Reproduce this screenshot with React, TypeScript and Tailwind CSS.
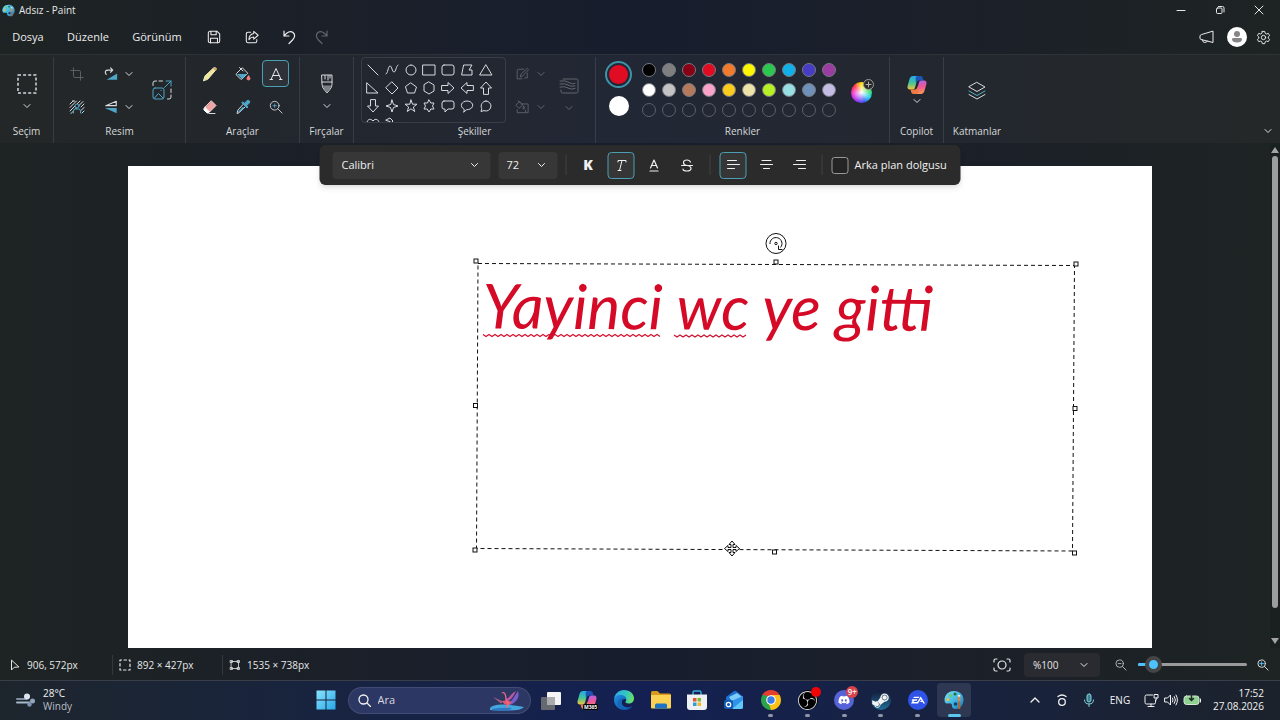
import React, { useState } from 'react';
import clsx from 'clsx';
import { FaDiscord, FaSteamSymbol } from 'react-icons/fa';
import { SiEa, SiObsstudio } from 'react-icons/si';

interface GlyphProps {
    size?: number;
    className?: string;
    box?: number;
    width?: number;
    children: React.ReactNode;
}

// Outline icon on a square grid, one unit is one pixel when box equals size
const Glyph: React.FC<GlyphProps> = ({ size = 16, box = 16, width = 1, className, children }) => (
    <svg
        width={size}
        height={size}
        viewBox={`0 0 ${box} ${box}`}
        fill="none"
        stroke="currentColor"
        strokeWidth={width}
        strokeLinecap="round"
        strokeLinejoin="round"
        className={clsx('shrink-0', className)}
        aria-hidden="true"
    >
        {children}
    </svg>
);

const Chevron: React.FC<{ className?: string }> = ({ className }) => (
    <Glyph size={8} box={8} className={className}>
        <path d="M1 2.5l3 3 3-3" />
    </Glyph>
);

const PaintLogo: React.FC<{ size: number }> = ({ size }) => (
    <svg width={size} height={size} viewBox="0 0 20 20" aria-hidden="true" className="shrink-0">
        <defs>
            <linearGradient id="palette" x1="0" y1="0" x2="1" y2="1">
                <stop offset="0" stopColor="#7de0f5" />
                <stop offset="0.55" stopColor="#3fb4e0" />
                <stop offset="1" stopColor="#1b74bc" />
            </linearGradient>
        </defs>
        <path d="M10 1C4 1 .5 5.500.5 10c0 3 2 4 4 3.500 2-.6 3.500.3 3.500 2 0 2 .8 3.500 3.500 3.500 4.500 0 8-4 8-9C19.500 4.500 15.500 1 10 1z" fill="url(#palette)" />
        <circle cx="4" cy="9.500" r="1.500" fill="#f2c230" />
        <circle cx="6.500" cy="5.500" r="1.500" fill="#6ccb5f" />
        <circle cx="11" cy="4" r="1.500" fill="#246d3c" />
        <circle cx="15" cy="6" r="1.300" fill="#e8eef2" />
        <circle cx="11.500" cy="14" r="1.800" fill="#17406b" />
        <path d="M13.800 6.500c2-.5 3.200.5 2.700 3l-.3 2h-2l-.6-2z" fill="#c98d55" />
        <path d="M14.200 11.500h2l.2 6.500c0 1.300-2.400 1.300-2.400 0z" fill="#a76b3c" />
    </svg>
);

const CopilotLogo: React.FC<{ id: string }> = ({ id }) => (
    <svg width="20" height="20" viewBox="0 0 20 20" aria-hidden="true">
        <defs>
            <linearGradient id={`${id}a`} x1="0" y1="0" x2="0" y2="1">
                <stop offset="0" stopColor="#2aa6e8" />
                <stop offset="0.5" stopColor="#3fc59b" />
                <stop offset="1" stopColor="#f0c53a" />
            </linearGradient>
            <linearGradient id={`${id}b`} x1="0.3" y1="0" x2="0.5" y2="1">
                <stop offset="0" stopColor="#a667e8" />
                <stop offset="0.5" stopColor="#f0569a" />
                <stop offset="1" stopColor="#f79a4a" />
            </linearGradient>
        </defs>
        <path d="M12.500 1H6C4 1 3 2.500 2.400 4.500L.6 11c-.5 2 .4 3.500 2.300 3.500h2.500c1.500 0 2.300-.8 2.700-2.200L10 5.500z" fill={`url(#${id}a)`} />
        <path d="M10.500 1h3c1.300 0 2 .8 2.300 2l.7 2.500h-4.200c-1.500 0-2.200.8-2.600 2L9 9 8.600 4c0-1.800.7-3 1.900-3z" fill="#1c55b8" />
        <path d="M7.500 19H14c2 0 3-1.500 3.600-3.500L19.400 9c.5-2-.4-3.500-2.300-3.500h-2.500c-1.500 0-2.300.8-2.700 2.200L10 14.500z" fill={`url(#${id}b)`} />
        <path d="M9.500 19h-3c-1.300 0-2-.8-2.300-2l-.7-2.500h4.200c1.500 0 2.200-.8 2.600-2L11 11l.4 5c0 1.800-.7 3-1.900 3z" fill="#ee7b45" />
    </svg>
);

// Gallery of shapes, each drawn on a 14 x 14 grid
const SHAPES: { name: string; d: string }[] = [
    { name: 'Çizgi', d: 'M2 2l10 10' },
    { name: 'Eğri', d: 'M1 11C3 11 3 3 5 3s2 6 4 6 2-6 4-7' },
    { name: 'Oval', d: 'M7 2a5 5 0 1 0 0 10A5 5 0 1 0 7 2' },
    { name: 'Dikdörtgen', d: 'M1 2h12v10H1z' },
    { name: 'Yuvarlatılmış dikdörtgen', d: 'M3 2h8q2 0 2 2v6q0 2-2 2H3q-2 0-2-2V4q0-2 2-2z' },
    { name: 'Çokgen', d: 'M4 2h8L9 7h3v5H2z' },
    { name: 'Üçgen', d: 'M7 2l6 10H1z' },
    { name: 'Dik üçgen', d: 'M1 2l11 10H1z' },
    { name: 'Elmas', d: 'M7 1l6 6-6 6-6-6z' },
    { name: 'Beşgen', d: 'M7 2l5.500 4-2 6h-7l-2-6z' },
    { name: 'Altıgen', d: 'M7 1l5 3v6l-5 3-5-3V4z' },
    { name: 'Sağ ok', d: 'M1 4.500h6V1.500L13 7l-6 5.500v-3H1z' },
    { name: 'Sol ok', d: 'M13 4.500H7V1.500L1 7l6 5.500v-3h6z' },
    { name: 'Yukarı ok', d: 'M4.500 13V7H1.500L7 1l5.500 6h-3v6z' },
    { name: 'Aşağı ok', d: 'M4.500 1v6H1.500L7 13l5.500-6h-3V1z' },
    { name: 'Dört köşeli yıldız', d: 'M7 1l1.500 4.500L13 7 8.500 8.500 7 13 5.500 8.500 1 7l4.500-1.500z' },
    { name: 'Beş köşeli yıldız', d: 'M7 1l1.500 4.200H13L9.400 8l1.300 4.500L7 9.800l-3.700 2.700L4.600 8 1 5.200h4.500z' },
    { name: 'Altı köşeli yıldız', d: 'M7 1l1.800 3H12l-1.500 3L12 10H8.800L7 13l-1.800-3H2l1.500-3L2 4h3.200z' },
    { name: 'Yuvarlak belirtme', d: 'M3 2h8q2 0 2 2v4q0 2-2 2H7l-3 3v-3H3q-2 0-2-2V4q0-2 2-2z' },
    { name: 'Oval belirtme', d: 'M4 10.300C-1 7.500 1.500 2 7 2s8 5.500 3 8q-1.500.8-3.500.7L4 13z' },
    { name: 'Bulut belirtme', d: 'M7 2a5 5 0 1 1-2 9.600L2 12.500l.8-3A5 5 0 0 1 7 2z' },
    { name: 'Kalp', d: 'M7 13L2 8C-1 4 4 0 7 4c3-4 8 0 5 4z' },
    { name: 'Şimşek', d: 'M1 3l4-2 3 3-1 1 3 2-1 1 3 4-6-3 1-1-3-2 1-1z' },
];

const PALETTE: string[][] = [
    ['#000000', '#7f7f7f', '#880015', '#df0c24', '#f27a2c', '#fdf800', '#2ac84e', '#12b0e8', '#473cc6', '#9b3ca2'],
    ['#ffffff', '#c3c3c3', '#b57a5c', '#faa3ca', '#fdcb1c', '#ede2aa', '#b8f026', '#98dfe4', '#6f90b9', '#c5bce4'],
];

const IconButton: React.FC<{ label: string; active?: boolean; disabled?: boolean; className?: string; onClick?: () => void; children: React.ReactNode }> = ({
    label,
    active,
    disabled,
    className,
    onClick,
    children,
}) => (
    <button
        type="button"
        aria-label={label}
        aria-pressed={active}
        disabled={disabled}
        onClick={onClick}
        className={clsx(
            'flex shrink-0 items-center justify-center rounded border',
            active ? 'border-[#4b9fb5] bg-white/5' : 'border-transparent',
            disabled && 'text-[#62666d]',
            className ?? 'size-[27px]',
        )}
    >
        {children}
    </button>
);

const RibbonGroup: React.FC<{ label: string; className: string; children: React.ReactNode }> = ({ label, className, children }) => (
    <section className={clsx('flex shrink-0 flex-col border-r border-white/10', className)}>
        <div className="flex flex-1 items-center justify-center">{children}</div>
        <h2 className="h-5 text-center text-[10px] leading-4 text-[#d6d8da]">{label}</h2>
    </section>
);

const TitleBar = () => (
    <header className="flex h-5 items-center pl-[2px] text-[#e6e6e6]">
        <PaintLogo size={13} />
        <h1 className="ml-1 flex-1 text-[10px] leading-4">Adsız - Paint</h1>
        <IconButton label="Simge durumuna küçült" className="h-5 w-[39px]">
            <Glyph size={10} box={10}><path d="M1 5.500h8" /></Glyph>
        </IconButton>
        <IconButton label="Önceki boyut" className="h-5 w-[39px]">
            <Glyph size={10} box={10}>
                <rect x="1.500" y="3" width="5.500" height="5.500" rx="1" />
                <path d="M3.500 1.500H7.500q1.500 0 1.500 1.500v4" />
            </Glyph>
        </IconButton>
        <IconButton label="Kapat" className="h-5 w-[39px]">
            <Glyph size={10} box={10}><path d="M1 1l8 8M9 1L1 9" /></Glyph>
        </IconButton>
        <span className="w-[2px]" />
    </header>
);

const MenuBar = () => (
    <nav className="flex h-[34px] items-center text-[#ececec]">
        <button type="button" className="w-14 text-[11px] leading-4">Dosya</button>
        <button type="button" className="w-16 text-[11px] leading-4">Düzenle</button>
        <button type="button" className="w-[74px] text-[11px] leading-4">Görünüm</button>
        <div className="flex h-4 items-center divide-x divide-white/10">
            <span className="w-px" />
            <IconButton label="Kaydet" className="w-[38px]">
                <Glyph size={14} width={1.2}>
                    <path d="M3.500 1.500h8l3 3v8q0 2-2 2h-9q-2 0-2-2v-9q0-2 2-2z" />
                    <path d="M4.500 1.500v4h6v-4M4 14.500v-5h8v5" />
                </Glyph>
            </IconButton>
            <IconButton label="Paylaş" className="w-[38px]">
                <Glyph size={14} width={1.2}>
                    <path d="M6.500 2.500h-3q-2 0-2 2v8q0 2 2 2h8q2 0 2-2V11" />
                    <path d="M10 1.500l5 4.500-5 4.500V8Q6.500 8 4.500 11q0-6 5.500-7z" />
                </Glyph>
            </IconButton>
            <span className="flex">
                <IconButton label="Geri al" className="w-9">
                    <Glyph size={15} box={15} width={1.2}><path d="M2 1v5h5M2 6C5 2 8.500.5 11 2.500s2 5-.5 7.500L7 13.500" /></Glyph>
                </IconButton>
                <IconButton label="Yinele" disabled className="w-7">
                    <Glyph size={15} box={15} width={1.2}><path d="M13 1v5H8M13 6C10 2 6.500.5 4 2.500s-2 5 .5 7.500L8 13.500" /></Glyph>
                </IconButton>
            </span>
        </div>
        <div className="ml-auto flex items-center pr-[3px]">
            <IconButton label="Geri bildirim">
                <Glyph size={15} box={15}>
                    <path d="M14 1.500v11L2 9.500Q1 9.300 1 8.200V6Q1 5 2 4.700z" />
                    <path d="M3.500 10q0 2.500 2.200 2.500T8.500 11" />
                </Glyph>
            </IconButton>
            <button type="button" aria-label="Hesap" className="mr-[3px] ml-[7px] flex size-5 items-center justify-center rounded-full bg-white">
                <svg width="12" height="12" viewBox="0 0 12 12" fill="#858585" aria-hidden="true">
                    <circle cx="6" cy="3" r="3" />
                    <path d="M2.500 7h7q1.500 0 1.500 1.300C11 10.500 9 11.500 6 11.500S1 10.500 1 8.300Q1 7 2.500 7z" />
                </svg>
            </button>
            <IconButton label="Ayarlar">
                <Glyph size={15}>
                    <circle cx="8" cy="8" r="2.300" />
                    <path d="M6.700 1.500h2.600l.5 2 1.300.8 2-.7 1.400 2.400-1.500 1.400v1.300l1.500 1.400-1.400 2.300-2-.6-1.300.8-.5 2H6.700l-.5-2-1.300-.8-2 .6-1.400-2.300L3 8.700V7.400L1.500 6l1.400-2.400 2 .7 1.300-.8z" />
                </Glyph>
            </IconButton>
        </div>
    </nav>
);

const ColorPicker = () => {
    const [color, setColor] = useState('#df0c24');

    return (
        <div className="flex h-full w-full items-start pt-[3px] pl-[9px]">
            <div className="flex flex-col items-center gap-2 pt-px">
                <button type="button" aria-label="Renk 1" className="flex size-[27px] items-center justify-center rounded-full border-2 border-[#3f93a8]">
                    <span className="size-[19px] rounded-full" style={{ backgroundColor: color }} />
                </button>
                <button type="button" aria-label="Renk 2" className="size-5 rounded-full bg-white" />
            </div>
            <div className="ml-[7px] grid grid-cols-10">
                {PALETTE.flat().map(value => (
                    <button key={value} type="button" aria-label={value} onClick={() => setColor(value)} className="flex size-5 items-center justify-center">
                        <span className="size-[14px] rounded-full border border-[#77797e]" style={{ backgroundColor: value }} />
                    </button>
                ))}
                {PALETTE[0].map((_, i) => (
                    <button key={i} type="button" aria-label={`Boş renk ${i + 1}`} className="flex size-5 items-center justify-center">
                        <span className="size-[14px] rounded-full border border-[#5c6068]" />
                    </button>
                ))}
            </div>
            <button type="button" aria-label="Renkleri düzenle" className="relative mt-[22px] ml-3 size-[21px] rounded-full bg-[radial-gradient(circle,#ffffff_0%,#ffffff00_65%),conic-gradient(#ffe500,#3ddc4a_70deg,#21d7e8_120deg,#345cf5_160deg,#8a36f0_200deg,#f02fe0_260deg,#ff2b52_310deg,#ffe500)]">
                <span className="absolute -top-[3px] -right-[2px] flex size-[11px] items-center justify-center rounded-full border border-[#9b9b9b] bg-[#2a2a2c] text-[#b0b0b0]">
                    <Glyph size={7} box={7}><path d="M3.500 1v5M1 3.500h5" /></Glyph>
                </span>
            </button>
        </div>
    );
};

const Ribbon = () => (
    <div className="flex h-[89px] items-stretch border-t border-white/5 bg-linear-to-r from-[#232727] via-[#222735] to-[#242828] pt-[2px] text-[#d8dadd]">
        <RibbonGroup label="Seçim" className="w-[54px]">
            <button type="button" aria-label="Seçim" className="flex flex-col items-center gap-2 pt-1">
                <Glyph size={20} box={20} width={1.5}>
                    <rect x="1" y="1" width="18" height="18" strokeDasharray="3 2.100" strokeLinecap="butt" />
                </Glyph>
                <Chevron />
            </button>
        </RibbonGroup>

        <RibbonGroup label="Resim" className="w-[132px]">
            <div className="flex items-center gap-[14px] pr-2">
                <div className="grid grid-cols-[42px_26px_10px] items-center justify-items-center gap-y-[6px]">
                    <IconButton label="Kırp" disabled>
                        <Glyph size={14}><path d="M4 1v9.500q0 1.500 1.500 1.500H15M1 4h9.500Q12 4 12 5.500V15" /></Glyph>
                    </IconButton>
                    <IconButton label="Döndür">
                        <Glyph size={14} width={1.3}>
                            <path d="M2.500 8.500Q-.5 3.500 5 3.500h5M7.500 1L10 3.500 7.500 6" />
                            <path d="M3 14.500h12v-7z" fill="#4fa6c9" stroke="none" />
                        </Glyph>
                    </IconButton>
                    <Chevron />
                    <IconButton label="Arka planı kaldır">
                        <Glyph size={16}>
                            <path d="M1 5l3-3M1 8.500L7.500 2M1 12l10-10M2 14.500L14 2.500M5.500 2h-2M15 5l-3 3M15 8.500l-3 3M15 12l-2 2" />
                            <circle cx="8" cy="7" r="2" stroke="#4fa6c9" fill="#242828" />
                            <path d="M4.500 14v-2q0-2 2-2h3q2 0 2 2v2" stroke="#4fa6c9" fill="#242828" />
                        </Glyph>
                    </IconButton>
                    <IconButton label="Çevir">
                        <Glyph size={14} width={1.3}>
                            <path d="M14 1.500v5H2z" />
                            <path d="M14.500 15V9H1z" fill="#4fa6c9" stroke="none" />
                        </Glyph>
                    </IconButton>
                    <Chevron />
                </div>
                <IconButton label="Yeniden boyutlandır">
                    <Glyph size={20} box={20}>
                        <path d="M1 5.500V3q0-2 2-2h1.500M7 1h3.500M19 9v3.500M19 15v2q0 2-2 2h-1.500" />
                        <rect x="1" y="8" width="11" height="11" rx="2" stroke="#4fa6c9" />
                        <path d="M2.500 18l4-4.500 4.500 4.500M9 10.500v.1M12.500 7.500L19 1M14 1h5v5" stroke="#4fa6c9" />
                    </Glyph>
                </IconButton>
            </div>
        </RibbonGroup>

        <RibbonGroup label="Araçlar" className="w-[114px]">
            <div className="grid grid-cols-3 gap-x-[6px] gap-y-[6px]">
                <IconButton label="Kalem">
                    <Glyph size={16}>
                        <path d="M1.500 14.500l1.500-4.500 8.500-8q1-1 2 0t0 2.200L6 13z" fill="#efe79a" stroke="#efe9c4" />
                        <path d="M11 2.500L13.500 5l1-1q.8-1 0-2t-2-.5z" fill="#caa96a" stroke="none" />
                    </Glyph>
                </IconButton>
                <IconButton label="Doldur">
                    <Glyph size={16}>
                        <path d="M7 2L1.500 7.500q-.7.700 0 1.500l4 4q.8.700 1.500 0L12.500 7.500z" />
                        <path d="M2 8h10l-5 5z" fill="#4fa6c9" stroke="none" />
                        <path d="M4.500 1.500L8 5" />
                        <path d="M13.500 9q2 2.500 2 3.800t-2 1.700q-2-.4-2-1.700t2-3.800z" fill="#f0807f" stroke="none" />
                    </Glyph>
                </IconButton>
                <IconButton label="Metin" active>
                    <Glyph size={14} box={14} className="text-[#e4e6e8]">
                        <path d="M2 12.500L7 1.500l5 11M4 8.500h6M1 12.500h2.500M10.500 12.500H13" />
                    </Glyph>
                </IconButton>
                <IconButton label="Silgi">
                    <Glyph size={16}>
                        <path d="M9.500 2l4.500 4.500L7.500 13 3 8.500z" fill="#f0a3a5" stroke="#f4d4d2" />
                        <path d="M3 8.500L7.500 13q-1.500 2-3 .5L2 11q-1-1 1-2.500z" fill="#fff" stroke="#fff" />
                        <path d="M7 14.500h6" />
                    </Glyph>
                </IconButton>
                <IconButton label="Renk seçici">
                    <Glyph size={16}>
                        <path d="M8.500 5.500l2 2-6 6-2.500 1 .8-3z" />
                        <path d="M3 13l4.500-5 2 .5-5 5z" fill="#4fa6c9" stroke="none" />
                        <path d="M7 4l5 5 1-1-1.200-1.500 2.500-2.500q1-1.200 0-2.200t-2.300 0L9.500 4.200 8 3z" fill="#4fa6c9" stroke="#4fa6c9" />
                    </Glyph>
                </IconButton>
                <IconButton label="Büyüteç">
                    <Glyph size={14}>
                        <circle cx="6.500" cy="6.500" r="5" />
                        <path d="M10.300 10.300L15 15" />
                        <path d="M6.500 4.500v4M4.500 6.500h4" stroke="#4fa6c9" />
                    </Glyph>
                </IconButton>
            </div>
        </RibbonGroup>

        <RibbonGroup label="Fırçalar" className="w-[54px]">
            <button type="button" aria-label="Fırçalar" className="flex flex-col items-center gap-2 pt-1">
                <Glyph size={20} box={20}>
                    <path d="M5 1h10v9.500q0 3-2.500 5.500L10 19l-2.500-3Q5 13.500 5 10.500z" />
                    <path d="M5 8h10M8 1.500V5M11 1.500V6M13 1.500V4" />
                    <path d="M5.500 11.500h9Q14 14 10 18.500 6 14 5.500 11.500z" fill="#7e8286" stroke="none" />
                </Glyph>
                <Chevron />
            </button>
        </RibbonGroup>

        <RibbonGroup label="Şekiller" className="w-[242px]">
            <div className="flex w-full items-center pl-[7px]">
                <div className="grid h-[66px] w-[145px] grid-cols-7 content-start gap-y-[4px] overflow-hidden rounded border border-white/10 pt-[5px] pr-[10px] pl-[2px]">
                    {SHAPES.map(shape => (
                        <button key={shape.name} type="button" aria-label={shape.name} className="flex justify-center">
                            <Glyph size={14} box={14}><path d={shape.d} /></Glyph>
                        </button>
                    ))}
                </div>
                <div className="ml-[2px] grid grid-cols-[28px_10px] items-center justify-items-center gap-y-[6px] text-[#62666d]">
                    <IconButton label="Şekil ana hattı" disabled>
                        <Glyph size={14}><path d="M8 13.500H2.500v-9q0-2 2-2H10M6 11l1-3 7-6.500L15.500 3 9 10zM11 12.500h3V7" /></Glyph>
                    </IconButton>
                    <Chevron />
                    <IconButton label="Şekil dolgusu" disabled>
                        <Glyph size={14}><path d="M7 4.500h8v10H2.500V11M5 2L1 6l3.500 3.500L8.500 6zM3.500 1L6 3M10 7q2 2.500 0 3.500Q8 9.500 10 7M12 11.500q1 1.500 0 2" /></Glyph>
                    </IconButton>
                    <Chevron />
                </div>
                <button type="button" aria-label="Boyut" disabled className="ml-[13px] flex flex-col items-center gap-2 pt-2 text-[#62666d]">
                    <Glyph size={20} box={20}>
                        <path d="M4 3h13.500q1.500 0 1.500 1.500v11q0 1.500-1.500 1.500h-14Q2 17 2 15.500V14" />
                        <path d="M1 5q5-1 9 1.500t6 1M1 8q5-1 8 1t7 1M1 11q5-1 8 1t7 .5" />
                    </Glyph>
                    <Chevron />
                </button>
            </div>
        </RibbonGroup>

        <RibbonGroup label="Renkler" className="w-[294px]">
            <ColorPicker />
        </RibbonGroup>

        <RibbonGroup label="Copilot" className="w-[54px]">
            <button type="button" aria-label="Copilot" className="flex flex-col items-center gap-[2px]">
                <CopilotLogo id="ribbon" />
                <Chevron />
            </button>
        </RibbonGroup>

        <section className="flex w-[66px] shrink-0 flex-col">
            <button type="button" aria-label="Katmanlar" className="flex flex-1 items-center justify-center pt-[2px]">
                <Glyph size={20} box={20}>
                    <path d="M10 1.500l8 4.500-8 4.500L2 6z" />
                    <path d="M2 10l8 4.500 8-4.500" stroke="#4fb3bd" />
                    <path d="M2 13.500l8 4.500 8-4.500" />
                </Glyph>
            </button>
            <h2 className="h-5 text-center text-[10px] leading-4 text-[#d6d8da]">Katmanlar</h2>
        </section>

        <button type="button" aria-label="Şeridi daralt" className="mr-[8px] mb-[8px] ml-auto self-end">
            <Chevron />
        </button>
    </div>
);

const TextToolbar = () => {
    const [italic, setItalic] = useState(true);
    const [align, setAlign] = useState('left');

    return (
        <div className="absolute top-[2px] left-1/2 z-10 flex h-10 w-[641px] -translate-x-1/2 items-center rounded-md bg-[#2b2b2b] pl-[13px] text-[#f0f0f0] shadow-md">
            <label className="relative flex items-center">
                <select aria-label="Yazı tipi" className="h-[27px] w-[158px] appearance-none rounded bg-[#373737] px-[9px] text-[11px]">
                    <option>Calibri</option>
                </select>
                <Chevron className="pointer-events-none absolute right-[12px]" />
            </label>
            <label className="relative ml-2 flex items-center">
                <select aria-label="Yazı tipi boyutu" className="h-[27px] w-[59px] appearance-none rounded bg-[#373737] px-2 text-[11px]">
                    <option>72</option>
                </select>
                <Chevron className="pointer-events-none absolute right-[12px]" />
            </label>
            <span className="mx-2 h-5 w-px bg-white/10" />
            <div className="flex gap-[6px]">
                <IconButton label="Kalın">
                    <span className="text-sm leading-4 font-extrabold">K</span>
                </IconButton>
                <IconButton label="İtalik" active={italic} onClick={() => setItalic(!italic)}>
                    <Glyph size={13} box={13}><path d="M3.500 3V1.500h8V3M7.500 1.500l-2.500 10M3.500 11.500h3" /></Glyph>
                </IconButton>
                <IconButton label="Altı çizili">
                    <Glyph size={13} box={13} width={1.2}><path d="M3 9l3.500-8L10 9M4.500 6.500h4M2.500 12h8" /></Glyph>
                </IconButton>
                <IconButton label="Üstü çizili">
                    <Glyph size={13} box={13} width={1.2}><path d="M10 3Q9 1 6.500 1 3 1 3 3.700 3 6 6.500 6.500 10.500 7 10.500 9.500q0 2.500-4 2.500T2.500 10M1 6.500h11" /></Glyph>
                </IconButton>
            </div>
            <span className="mx-[9px] h-5 w-px bg-white/10" />
            <div className="flex gap-[6px]">
                <IconButton label="Sola hizala" active={align === 'left'} onClick={() => setAlign('left')}>
                    <Glyph size={14} box={14}><path d="M1 2.500h9M1 6.500h12M1 10.500h7" /></Glyph>
                </IconButton>
                <IconButton label="Ortala" active={align === 'center'} onClick={() => setAlign('center')}>
                    <Glyph size={14} box={14}><path d="M2.500 2.500h9M1 6.500h12M4 10.500h6" /></Glyph>
                </IconButton>
                <IconButton label="Sağa hizala" active={align === 'right'} onClick={() => setAlign('right')}>
                    <Glyph size={14} box={14}><path d="M4 2.500h9M1 6.500h12M6 10.500h7" /></Glyph>
                </IconButton>
            </div>
            <span className="mx-[9px] h-5 w-px bg-white/10" />
            <label className="flex items-center gap-[6px] text-[11px] leading-4">
                <input type="checkbox" className="size-[17px] appearance-none rounded-[3px] border border-[#9a9a9a] bg-[#242424] checked:bg-[#4cc2ff]" />
                Arka plan dolgusu
            </label>
        </div>
    );
};

const HANDLES = [[476, 261], [776, 262], [1076, 264], [475.5, 405.5], [1075, 408.5], [475, 550], [774.5, 552], [1074.5, 553]];

// Zigzag line under a misspelled word
const squiggle = (from: number, to: number, y: number) => {
    let d = `M${from} ${y}`;
    for (let x = from + 3; x <= to; x += 3) {
        d += `L${x} ${(x - from) % 6 === 0 ? y : y + 2}`;
    }
    return d;
};

const Canvas = () => {
    const [text, setText] = useState('Yayinci wc ye gitti');

    return (
        <main className="relative flex min-h-[505px] flex-1 flex-col">
            <TextToolbar />
            <div className="relative mx-auto mt-[23px] w-4/5 flex-1 bg-white">
                <textarea
                    aria-label="Metin"
                    value={text}
                    onChange={e => setText(e.target.value)}
                    spellCheck={false}
                    className="absolute top-[100px] left-[350px] h-[282px] w-[594px] rotate-[0.3deg] resize-none bg-transparent px-1 py-[4px] font-[Lato,sans-serif] text-[62px] leading-[72px] text-[#d40a26] italic outline-none"
                />
                <svg width="640" height="350" viewBox="460 225 640 350" className="pointer-events-none absolute top-[59px] left-[332px]" fill="none" stroke="#111" aria-hidden="true">
                    <path d="M478 263.500L1074.500 265.500 1072.500 551 476.500 548.500z" strokeDasharray="4 3" />
                    {HANDLES.map(([x, y]) => (
                        <rect key={`${x}-${y}`} x={x - 2} y={y - 2} width="4" height="4" fill="#fff" />
                    ))}
                    <circle cx="776" cy="243.500" r="10" fill="#fff" />
                    <path d="M770 244a6 6 0 1 1 10.500 3.500M778.500 245.500v4h4" />
                    <circle cx="776" cy="243.500" r="1.200" />
                    <path d={squiggle(483, 660, 334.500)} stroke="#cf1432" strokeWidth="1.300" />
                    <path d={squiggle(674, 747, 335)} stroke="#cf1432" strokeWidth="1.300" />
                    {/* move cursor */}
                    <path d="M732 541l3 3.500h-2v3h3v-2l3.500 3-3.500 3v-2h-3v3h2l-3 3.500-3-3.500h2v-3h-3v2l-3.500-3 3.500-3v2h3v-3h-2z" fill="#fff" />
                </svg>
            </div>
            <div className="absolute inset-y-0 right-0 flex w-[10px] flex-col items-center gap-[3px] bg-black/10 py-[4px]">
                <svg width="8" height="6" viewBox="0 0 8 6" fill="#a3a3a3" aria-hidden="true"><path d="M4 0l4 6H0z" /></svg>
                <span className="w-[6px] flex-[452] rounded-full bg-[#9b9d9e]" />
                <span className="flex-[24]" />
                <svg width="8" height="6" viewBox="0 0 8 6" fill="#a3a3a3" aria-hidden="true"><path d="M4 6l4-6H0z" /></svg>
            </div>
        </main>
    );
};

const StatusBar = () => {
    const [zoom, setZoom] = useState(8);

    return (
        <footer className="flex h-8 items-center pt-px text-[10px] leading-4 text-[#e6e6e6]">
            <div className="flex w-[112px] items-center gap-[6px] pl-[9px]">
                <Glyph size={12} box={12}><path d="M2.500 1.500v9.500l2.700-2.700L9.500 8z" /></Glyph>
                <span>906, 572px</span>
            </div>
            <div className="flex h-5 w-[110px] items-center gap-[6px] border-l border-white/10 pl-[6px]">
                <Glyph size={12} box={12} width={1.2}><rect x="1" y="1" width="10" height="10" strokeDasharray="2.500 2.500" strokeDashoffset="1" /></Glyph>
                <span>892 × 427px</span>
            </div>
            <div className="flex h-5 items-center gap-[6px] border-l border-white/10 pl-[6px]">
                <Glyph size={12} box={12}><path d="M2.500 2.500h7v7h-7zM1.500 1.500h2v2h-2zM8.500 1.500h2v2h-2zM1.500 8.500h2v2h-2zM8.500 8.500h2v2h-2z" strokeWidth="0.800" /></Glyph>
                <span>1535 × 738px</span>
            </div>
            <div className="ml-auto flex items-center pr-[5px]">
                <IconButton label="Pencereye sığdır">
                    <Glyph size={18} box={18} width={1.2}>
                        <circle cx="9" cy="9" r="4" />
                        <path d="M1 6V4.500Q1 3 2.500 3H4M14 3h1.500Q17 3 17 4.500V6M17 12v1.500q0 1.500-1.500 1.500H14M4 15H2.500Q1 15 1 13.500V12" />
                    </Glyph>
                </IconButton>
                <label className="relative ml-[9px] flex items-center">
                    <select aria-label="Yakınlaştırma" className="h-6 w-[76px] appearance-none rounded bg-[#2a2b31] px-[9px] text-[10px]">
                        <option>%100</option>
                    </select>
                    <Chevron className="pointer-events-none absolute right-[12px]" />
                </label>
                <IconButton label="Uzaklaştır" className="ml-[7px] size-[27px] text-[#b9bcbf]">
                    <Glyph size={12} box={13}><circle cx="5" cy="5" r="4" /><path d="M8 8l4 4M3.500 5h3" /></Glyph>
                </IconButton>
                <div className="relative ml-1 flex h-5 w-[109px] items-center">
                    <span className="absolute h-[3px] w-full rounded-full bg-[#9a9a9a]" />
                    <span className="absolute h-[3px] rounded-full bg-[#4cc2ff]" style={{ width: `${zoom}%` }} />
                    <input
                        type="range"
                        aria-label="Yakınlaştırma düzeyi"
                        value={zoom}
                        onChange={e => setZoom(Number(e.target.value))}
                        className="relative w-full appearance-none bg-transparent [&::-webkit-slider-thumb]:size-[17px] [&::-webkit-slider-thumb]:appearance-none [&::-webkit-slider-thumb]:rounded-full [&::-webkit-slider-thumb]:border-4 [&::-webkit-slider-thumb]:border-[#454545] [&::-webkit-slider-thumb]:bg-[#4cc2ff]"
                    />
                </div>
                <IconButton label="Yakınlaştır" className="ml-[4px] w-6">
                    <Glyph size={12} box={13}>
                        <circle cx="5" cy="5" r="4" />
                        <path d="M8 8l4 4" />
                        <path d="M3 5h4M5 3v4" stroke="#4cc2ff" />
                    </Glyph>
                </IconButton>
            </div>
        </footer>
    );
};

const TaskIcon: React.FC<{ label: string; running?: boolean; active?: boolean; children: React.ReactNode }> = ({ label, running, active, children }) => (
    <button
        type="button"
        aria-label={label}
        className={clsx('relative flex h-[34px] w-[34px] shrink-0 items-center justify-center rounded', active && 'bg-white/10')}
    >
        {children}
        {running && <span className={clsx('absolute bottom-0 h-[3px] rounded-full', active ? 'w-[13px] bg-[#5cc8ee]' : 'w-[5px] bg-[#9096a8]')} />}
    </button>
);

const Taskbar = () => (
    <footer className="grid h-10 grid-cols-[1fr_auto_1fr] items-center border-t border-[#3a3e49] bg-linear-to-r from-[#1d252c] via-[#142052] to-[#1c222b] pb-px text-[#f2f2f2]">
        <button type="button" className="flex items-center gap-[7px] justify-self-start pl-4 text-left text-[10px] leading-[13px]">
            <svg width="20" height="16" viewBox="0 0 20 16" fill="none" strokeLinecap="round" strokeWidth="2" aria-hidden="true">
                <path d="M1 7h9.500" stroke="#7f8fa3" />
                <circle cx="11" cy="4.500" r="3" fill="#dbe4ef" />
                <path d="M1 10.500h12.500" stroke="#a9b8ca" />
                <circle cx="16.500" cy="9" r="2.500" fill="#93a5bc" />
                <circle cx="13.500" cy="12.500" r="2.200" fill="#7d93ae" />
            </svg>
            <span>
                28°C
                <br />
                <span className="text-[#b9bec6]">Windy</span>
            </span>
        </button>

        <div className="flex items-center">
            <TaskIcon label="Başlat">
                <svg width="20" height="20" viewBox="0 0 20 20" aria-hidden="true">
                    <defs>
                        <linearGradient id="win" x1="0" y1="0" x2="1" y2="1">
                            <stop offset="0" stopColor="#8be4fb" />
                            <stop offset="1" stopColor="#27a7ea" />
                        </linearGradient>
                    </defs>
                    <path d="M.5.5h9v9h-9zM10.500.5h9v9h-9zM.5 10.500h9v9h-9zM10.500 10.500h9v9h-9z" fill="url(#win)" />
                </svg>
            </TaskIcon>
            <label className="relative mr-[3px] ml-[5px] flex h-[27px] w-[183px] items-center rounded-full border border-white/10 bg-[#2d3763]">
                <Glyph size={13} box={13} width={1.3} className="ml-[9px]"><circle cx="5.500" cy="5.500" r="4.500" /><path d="M9 9l3.500 3.500" /></Glyph>
                <input type="search" aria-label="Ara" placeholder="Ara" className="ml-[7px] w-24 bg-transparent text-[11px] outline-none placeholder:text-[#d7d9e2]" />
                <svg width="36" height="22" viewBox="0 0 36 22" fill="none" className="mr-[5px] ml-auto" aria-hidden="true">
                    <path d="M1 19q3-4 14-3.500T35 18q-3 3.500-15 3.500T1 21z" fill="#43a7dd" />
                    <path d="M3 20q9-2 20-1l-3 2.500H3z" fill="#2c79c4" />
                    <path d="M17 14q5 0 8-6l4-6q2 6-2 10t-7 4z" fill="#7c5ccc" />
                    <path d="M16 13q6 0 11-11-4 2-6 5t-4 3z" fill="#b9589e" />
                    <path d="M13 12q4-1 7 0l3 1q-2 3-5 3t-5-4z" fill="#e0586f" />
                    <path d="M20 15q-3-2-3-5t-1-5-3-1M19 15l-1 4" stroke="#ef6a7c" strokeWidth="1.300" />
                    <path d="M14 12.500L4 8l8 6.500z" fill="#a5607f" />
                </svg>
            </label>
            {/* pinned and running apps */}
            <div className="flex w-[438px] justify-between">
                <TaskIcon label="Görev görünümü">
                    <svg width="20" height="19" viewBox="0 0 20 19" aria-hidden="true">
                        <rect x="6" y="1" width="14" height="13" rx="1" fill="#f4f4f4" />
                        <rect x="0" y="6" width="14" height="13" rx="1" fill="#666a70" />
                        <path d="M6 6h8v8H6z" fill="#a9abae" />
                    </svg>
                </TaskIcon>
                <TaskIcon label="Microsoft 365 Copilot">
                    <CopilotLogo id="task" />
                    <span className="absolute right-[6px] bottom-[7px] rounded-xs bg-black px-px text-[5px] leading-[6px] font-bold text-white">M365</span>
                </TaskIcon>
                <TaskIcon label="Edge">
                    <svg width="20" height="20" viewBox="0 0 20 20" aria-hidden="true">
                        <defs>
                            <linearGradient id="edgeTop" x1="0" y1="0.300" x2="1" y2="0.500">
                                <stop offset="0" stopColor="#2aa8e6" />
                                <stop offset="0.600" stopColor="#35c6c0" />
                                <stop offset="1" stopColor="#6ce05f" />
                            </linearGradient>
                            <linearGradient id="edgeLow" x1="0" y1="0" x2="1" y2="1">
                                <stop offset="0" stopColor="#1f8fe0" />
                                <stop offset="1" stopColor="#0c4aa0" />
                            </linearGradient>
                        </defs>
                        <path d="M0 9.500C.5 4 4.500 0 10 0c6 0 10 4 10 8.500 0 3-2.300 5-5.300 5-2.400 0-3.600-.9-3.200-1.700.5-.6.8-1.300.8-2.200C12.300 7.500 10 6 7 6 3.500 6 1 7.500 0 9.500z" fill="url(#edgeTop)" />
                        <path d="M0 10c.5-3 3-5 6.500-5 3.500 0 5.700 2 5.800 4.500C10.500 8 7.500 9.500 7.500 12.500c0 3.500 4 6 8.500 4.500 1.200-.4 2-.8 2.500-1C17 18.500 14 20 10.500 20 4.500 20 0 15.500 0 10z" fill="url(#edgeLow)" />
                        <path d="M7.700 11c-.7 3.500 2 7.500 7.300 6.500-3 2-6.500 2-9 .5-3-2-3-6.500-.5-8.500 1.500-1.200 4-1.800 6.500-1-1.800-.3-3.800.5-4.300 2.500z" fill="#1567b8" />
                    </svg>
                </TaskIcon>
                <TaskIcon label="Dosya Gezgini">
                    <svg width="20" height="18" viewBox="0 0 20 18" aria-hidden="true">
                        <path d="M0 1.500Q0 0 1.500 0h5L9 2.500h9.500Q20 2.500 20 4v5H0z" fill="#d99a1c" />
                        <path d="M0 4h20v12.500q0 1-1 1H1q-1 0-1-1z" fill="#fbd254" />
                        <path d="M4 17.500V14q0-1.500 1.500-1.500h9Q16 12.500 16 14v3.500z" fill="#1c74c4" />
                    </svg>
                </TaskIcon>
                <TaskIcon label="Microsoft Store">
                    <svg width="20" height="20" viewBox="0 0 20 20" aria-hidden="true">
                        <path d="M6 5V2.500Q6 1 7.500 1h5Q14 1 14 2.500V5" fill="none" stroke="#3ba8dd" strokeWidth="1.500" />
                        <path d="M0 4.500h20V17q0 3-3 3H3q-3 0-3-3z" fill="#eef0f4" />
                        <path d="M6 8h3.500v3.500H6z" fill="#e8552d" />
                        <path d="M10.500 8H14v3.500h-3.500z" fill="#7cb82f" />
                        <path d="M6 12.500h3.500V16H6z" fill="#2a9fe0" />
                        <path d="M10.500 12.500H14V16h-3.500z" fill="#f5b91e" />
                    </svg>
                </TaskIcon>
                <TaskIcon label="Outlook">
                    <svg width="20" height="20" viewBox="0 0 20 20" aria-hidden="true">
                        <path d="M2 7l8-6q1-.7 2 0l7 5.500V17q0 2-2 2H4q-2 0-2-2z" fill="#1c6fd0" />
                        <path d="M5 7l8-4 5 4-9 6z" fill="#7ccdf8" />
                        <path d="M5 12L19 6v11q0 2-2 2H9z" fill="#2f94e8" />
                        <path d="M8 19l11-9v7q0 2-2 2z" fill="#62c8f8" />
                        <rect x="0" y="10" width="9" height="9" rx="2" fill="#0f58b4" />
                        <circle cx="4.500" cy="14.500" r="2.200" fill="none" stroke="#fff" strokeWidth="1.300" />
                    </svg>
                </TaskIcon>
                <TaskIcon label="Chrome" running>
                    <svg width="20" height="20" viewBox="0 0 20 20" aria-hidden="true">
                        <path d="M10 10L1.340 5A10 10 0 0 1 18.660 5z" fill="#e43e30" />
                        <path d="M10 10L18.660 5A10 10 0 0 1 10 20z" fill="#fbc116" />
                        <path d="M10 10V20A10 10 0 0 1 1.340 5z" fill="#2ba24c" />
                        <path d="M10 5h8.660L14.300 12.500z" fill="#fbc116" />
                        <path d="M14.300 12.500L10 20 8 14z" fill="#fbc116" />
                        <path d="M5.700 12.500L1.340 5 7 6z" fill="#2ba24c" />
                        <circle cx="10" cy="10" r="4.800" fill="#fff" />
                        <circle cx="10" cy="10" r="3.700" fill="#3b7de8" />
                    </svg>
                </TaskIcon>
                <TaskIcon label="OBS Studio" running>
                    <span className="flex size-5 items-center justify-center rounded-full bg-black">
                        <SiObsstudio size={19} color="#d8d8dc" />
                    </span>
                    <span className="absolute top-[4px] right-[4px] size-[10px] rounded-full bg-[#f00505]" />
                </TaskIcon>
                <TaskIcon label="Discord" running>
                    <span className="flex size-5 items-center justify-center rounded-full bg-[#5662d8]">
                        <FaDiscord size={12} color="#fff" />
                    </span>
                    <span className="absolute top-[3px] right-[3px] flex size-[12px] items-center justify-center rounded-full bg-[#d6434a] text-[8px] leading-3 font-semibold">9+</span>
                </TaskIcon>
                <TaskIcon label="Steam" running>
                    <span className="flex size-5 items-center justify-center overflow-hidden rounded-full bg-linear-to-b from-[#101a38] to-[#1f6f98]">
                        <FaSteamSymbol size={19} color="#f2f2f2" />
                    </span>
                </TaskIcon>
                <TaskIcon label="EA" running>
                    <span className="flex size-5 items-center justify-center rounded-full bg-[#2e53e6]">
                        <SiEa size={14} color="#fff" />
                    </span>
                </TaskIcon>
                <TaskIcon label="Paint" running active>
                    <PaintLogo size={20} />
                </TaskIcon>
            </div>
        </div>

        <div className="flex items-center justify-self-end pr-4">
            <IconButton label="Gizli simgeleri göster">
                <Glyph size={10} box={10} width={1.3}><path d="M1 7l4-4 4 4" /></Glyph>
            </IconButton>
            <IconButton label="Uygulama simgesi">
                <Glyph size={12} box={12} width={1.3}><path d="M2 2.500Q6-.5 10 2.500" /><circle cx="6" cy="8" r="3.300" /></Glyph>
            </IconButton>
            <IconButton label="Mikrofon">
                <Glyph size={14} box={14} className="text-[#86d3dc]">
                    <rect x="5" y="1" width="4" height="8" rx="2" fill="#3c7f92" />
                    <path d="M2.500 7q0 4 4.500 4t4.500-4M7 11v2.500" />
                </Glyph>
            </IconButton>
            <button type="button" className="w-9 text-[10px] leading-4">ENG</button>
            <button type="button" aria-label="Ağ, ses ve pil" className="ml-[6px] flex items-center gap-[5px]">
                <Glyph size={15} box={15}>
                    <path d="M8.500 2H2.500Q1 2 1 3.500v6Q1 11 2.500 11H10q1.500 0 1.500-1.500V7M4 13.500h6M7 11v2.500" />
                    <path d="M10.500 1.500H14V5h-3.500zM12.200 5v2" />
                </Glyph>
                <Glyph size={14} box={14}>
                    <path d="M1 5h2.500L6.500 2v10L3.500 9H1zM8.500 5q1.300 2 0 4M10.300 3.500q2.500 3.500 0 7M12 2q3 5 0 10" />
                </Glyph>
                <Glyph size={18} box={18}>
                    <rect x="1" y="5" width="15" height="8.500" rx="2.500" fill="#8fd28f" stroke="#d4e6d4" />
                    <path d="M17.500 8v3" />
                    <path d="M8.500 3.500V9M6.500 7.500l2 2 2-2" stroke="#1e2a2a" strokeWidth="1.500" />
                </Glyph>
            </button>
            <time className="ml-3 text-right text-[10px] leading-[13px]">
                17:52
                <br />
                27.08.2026
            </time>
        </div>
    </footer>
);

export default function App() {
    return (
        <div className="flex min-h-screen flex-col bg-linear-to-r from-[#1e2323] via-[#181d2e] to-[#1e2323] font-['Open_Sans','Noto_Sans',sans-serif]">
            <TitleBar />
            <MenuBar />
            <Ribbon />
            <Canvas />
            <StatusBar />
            <Taskbar />
        </div>
    );
}
